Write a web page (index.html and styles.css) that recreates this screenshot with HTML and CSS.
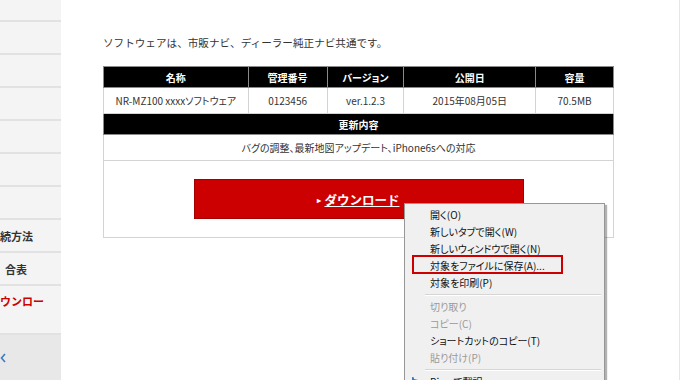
FILE: index.html
```html
<!DOCTYPE html>
<html lang="ja">
<head>
  <meta charset="UTF-8">
  <meta name="viewport" content="width=device-width, initial-scale=1.0">
  <title>ソフトウェアダウンロード</title>
  <link rel="stylesheet" href="styles.css">
</head>
<body>
  <div class="page">
    <nav class="side">
      <div class="side-item first"></div>
      <div class="side-item"></div>
      <div class="side-item"></div>
      <div class="side-item"></div>
      <div class="side-item"></div>
      <div class="side-item"></div>
      <div class="side-item"></div>
      <div class="side-item"><span class="frag">続方法</span></div>
      <div class="side-item"><span class="frag frag-b">合表</span></div>
      <div class="side-item active"><span class="frag">ウンロー</span></div>
      <div class="side-item back">
        <svg class="back-mark" width="6" height="10" viewBox="0 0 6 10">
          <path d="M5 1 L1.5 5 L5 9" fill="none" stroke="#3b7cc4" stroke-width="1.6"/>
        </svg>
      </div>
    </nav>

    <main class="main">
      <p class="lead">ソフトウェアは、市販ナビ、ディーラー純正ナビ共通です。</p>

      <table class="soft-table">
        <colgroup>
          <col class="c1"><col class="c2"><col class="c3"><col class="c4"><col class="c5">
        </colgroup>
        <tr>
          <th>名称</th>
          <th>管理番号</th>
          <th>バージョン</th>
          <th>公開日</th>
          <th>容量</th>
        </tr>
        <tr>
          <td>NR-MZ100 xxxxソフトウェア</td>
          <td>0123456</td>
          <td>ver.1.2.3</td>
          <td>2015年08月05日</td>
          <td>70.5MB</td>
        </tr>
        <tr>
          <th colspan="5">更新内容</th>
        </tr>
        <tr>
          <td colspan="5">バグの調整、最新地図アップデート、iPhone6sへの対応</td>
        </tr>
        <tr>
          <td colspan="5" class="dl-cell">
            <a class="dl-button" href="#"><span class="arrow">&#9656;</span><span class="dl-text">ダウンロード</span></a>
          </td>
        </tr>
      </table>
    </main>
  </div>

  <div class="ctx-menu">
    <div class="ctx-item">開く(O)</div>
    <div class="ctx-item">新しいタブで開く(W)</div>
    <div class="ctx-item">新しいウィンドウで開く(N)</div>
    <div class="ctx-item">対象をファイルに保存(A)...</div>
    <div class="ctx-item">対象を印刷(P)</div>
    <div class="ctx-sep"></div>
    <div class="ctx-item off">切り取り</div>
    <div class="ctx-item off">コピー(C)</div>
    <div class="ctx-item">ショートカットのコピー(T)</div>
    <div class="ctx-item off">貼り付け(P)</div>
    <div class="ctx-sep"></div>
    <div class="ctx-item">
      <svg class="ctx-icon" width="9" height="9" viewBox="0 0 9 9">
        <path d="M2 1 L2 7 L4 8 L8 5.5 L8 4 L4 3 L4 1.5 Z" fill="#2f7ec4"/>
      </svg>
      Bing で翻訳
    </div>
  </div>

  <div class="mark"></div>
</body>
</html>
```

FILE: styles.css
```css
body {
  margin: 0;
  width: 680px;
  height: 380px;
  overflow: hidden;
  position: relative;
  font-family: "Noto Sans CJK JP", sans-serif;
  color: #333;
  background-color: #fff;
}

.page {
  display: flex;
  height: 380px;
}

/* left navigation, only its right end is in view */
.side {
  width: 61px;
  flex: none;
  background-color: #f4f4f4;
  overflow: hidden;
}

.side-item {
  height: 31px;
  border-bottom: 2px solid #e2e2e2;
  display: flex;
  align-items: center;
  font-size: 11px;
  font-weight: bold;
  white-space: nowrap;
}

.side-item.first {
  height: 20px;
}

.side-item.active {
  height: 40px;
  padding-top: 7px;
  align-items: flex-start;
  color: #cc0000;
}

.side-item.back {
  height: 45px;
  border-bottom: none;
  background-color: #e8e8e8;
}

.frag-b {
  margin-left: 5px;
}

.back-mark {
  margin-left: 0;
}

.main {
  flex: 1;
  padding: 0 65px 0 42px;
  border-right: 1px solid #e6e6e6;
}

.lead {
  margin: 35px 0 15px;
  font-size: 10.6px;
  line-height: 16px;
}

.soft-table {
  width: 511px;
  border-collapse: collapse;
  font-size: 10px;
  text-align: center;
  font-feature-settings: "palt";
}

.c1 { width: 145px; }
.c2 { width: 79px; }
.c3 { width: 77px; }
.c4 { width: 132px; }
.c5 { width: 78px; }

.soft-table th {
  height: 20px;
  padding: 0;
  background-color: #000;
  color: #fff;
  font-weight: bold;
  border: 1px solid #8a8a8a;
}

.soft-table td {
  height: 25px;
  padding: 0;
  border: 1px solid #d4d4d4;
}

.soft-table td.dl-cell {
  height: auto;
  padding: 18px 0 18px;
}

.dl-button {
  display: flex;
  justify-content: center;
  align-items: center;
  width: 330px;
  height: 40px;
  margin: 0 auto;
  box-sizing: border-box;
  background-color: #cc0000;
  border: 1px solid #a30000;
  color: #fff;
  font-size: 12.5px;
  font-weight: bold;
  text-decoration: none;
  font-feature-settings: normal;
}

.arrow {
  font-size: 8px;
  margin-right: 3px;
}

.dl-text {
  text-decoration: underline;
}

/* right click menu over the page */
.ctx-menu {
  position: absolute;
  left: 404px;
  top: 203px;
  width: 195px;
  padding: 2px;
  background-color: #f0f0f0;
  border: 1px solid #979797;
  box-shadow: 2px 2px 1px rgba(0, 0, 0, 0.3);
  font-size: 10px;
  color: #111;
  font-feature-settings: "palt";
}

.ctx-item {
  position: relative;
  height: 17px;
  line-height: 17px;
  padding-left: 23px;
  white-space: nowrap;
}

.ctx-item.off {
  color: #9a9a9a;
}

.ctx-icon {
  position: absolute;
  left: 3px;
  top: 3px;
}

.ctx-sep {
  margin: 3px 1px 2px 18px;
  border-top: 1px solid #d5d5d5;
  border-bottom: 1px solid #fff;
}

.mark {
  position: absolute;
  left: 412px;
  top: 255px;
  width: 151px;
  height: 19px;
  box-sizing: border-box;
  border: 2px solid #cc0000;
}
```
